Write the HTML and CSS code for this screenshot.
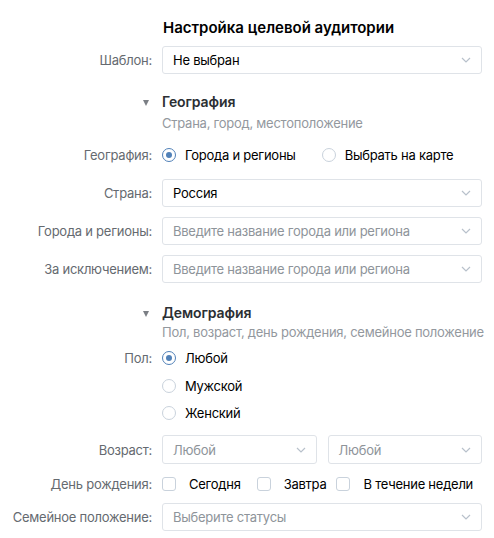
FILE: index.html
```html
<!DOCTYPE html>
<html lang="ru">
<head>
<meta charset="utf-8">
<link rel="stylesheet" href="styles.css">
</head>
<body>
<div class="form">
  <div class="row title-row">
    <div class="label"></div>
    <div class="ctrl"><h1 class="title">Настройка целевой аудитории</h1></div>
  </div>

  <div class="row row-select r-template">
    <div class="label">Шаблон:</div>
    <div class="ctrl"><div class="select"><span class="val">Не выбран</span><svg class="chev" viewBox="0 0 10 6"><path d="M1 1l4 4 4-4"/></svg></div></div>
  </div>

  <div class="row section-head r-geo">
    <div class="label"><span class="tri"></span></div>
    <div class="ctrl"><span class="sec-title">География</span></div>
  </div>
  <div class="row sub-row">
    <div class="label"></div>
    <div class="ctrl sub">Страна, город, местоположение</div>
  </div>

  <div class="row line-row r-georadio">
    <div class="label">География:</div>
    <div class="ctrl inline">
      <label class="opt"><span class="radio on"></span>Города и регионы</label>
      <label class="opt opt-map"><span class="radio"></span>Выбрать на карте</label>
    </div>
  </div>

  <div class="row row-select r-country">
    <div class="label">Страна:</div>
    <div class="ctrl"><div class="select"><span class="val">Россия</span><svg class="chev" viewBox="0 0 10 6"><path d="M1 1l4 4 4-4"/></svg></div></div>
  </div>
  <div class="row row-select r-next">
    <div class="label">Города и регионы:</div>
    <div class="ctrl"><div class="select"><span class="ph">Введите название города или региона</span><svg class="chev" viewBox="0 0 10 6"><path d="M1 1l4 4 4-4"/></svg></div></div>
  </div>
  <div class="row row-select r-next">
    <div class="label">За исключением:</div>
    <div class="ctrl"><div class="select"><span class="ph">Введите название города или региона</span><svg class="chev" viewBox="0 0 10 6"><path d="M1 1l4 4 4-4"/></svg></div></div>
  </div>

  <div class="row section-head r-demo">
    <div class="label"><span class="tri"></span></div>
    <div class="ctrl"><span class="sec-title">Демография</span></div>
  </div>
  <div class="row sub-row sub-demo">
    <div class="label"></div>
    <div class="ctrl sub">Пол, возраст, день рождения, семейное положение</div>
  </div>

  <div class="row line-row r-sex">
    <div class="label">Пол:</div>
    <div class="ctrl"><label class="opt"><span class="radio on"></span>Любой</label></div>
  </div>
  <div class="row line-row r-sex2">
    <div class="label"></div>
    <div class="ctrl"><label class="opt"><span class="radio"></span>Мужской</label></div>
  </div>
  <div class="row line-row r-sex3">
    <div class="label"></div>
    <div class="ctrl"><label class="opt"><span class="radio"></span>Женский</label></div>
  </div>

  <div class="row row-select r-age">
    <div class="label">Возраст:</div>
    <div class="ctrl pair">
      <div class="select"><span class="ph">Любой</span><svg class="chev" viewBox="0 0 10 6"><path d="M1 1l4 4 4-4"/></svg></div>
      <div class="select"><span class="ph">Любой</span><svg class="chev" viewBox="0 0 10 6"><path d="M1 1l4 4 4-4"/></svg></div>
    </div>
  </div>

  <div class="row line-row r-bday">
    <div class="label">День рождения:</div>
    <div class="ctrl inline">
      <label class="opt chk-opt"><span class="check"></span>Сегодня</label>
      <label class="opt chk-opt c2"><span class="check"></span>Завтра</label>
      <label class="opt chk-opt c3"><span class="check"></span>В течение недели</label>
    </div>
  </div>

  <div class="row row-select r-family">
    <div class="label">Семейное положение:</div>
    <div class="ctrl"><div class="select"><span class="ph">Выберите статусы</span><svg class="chev" viewBox="0 0 10 6"><path d="M1 1l4 4 4-4"/></svg></div></div>
  </div>
</div>
</body>
</html>
```

FILE: styles.css
```css
* { box-sizing: border-box; }
html, body { margin: 0; padding: 0; background: #fff; }
body {
  font-family: "Inter", "Noto Sans", "Liberation Sans", sans-serif;
  font-size: 13px;
  letter-spacing: -0.25px;
  color: #000;
}
.form { padding-top: 18px; width: 494px; }
.row { display: flex; align-items: center; }
.label {
  width: 152px;
  flex: none;
  text-align: right;
  color: #656a70;
  white-space: nowrap;
}
.ctrl { width: 320px; margin-left: 10px; flex: none; white-space: nowrap; }
.title {
  margin: 0 0 0 1px;
  font-size: 15px;
  line-height: 20px;
  font-weight: 600;
  letter-spacing: 0;
  color: #000;
}
.select {
  height: 28px;
  border: 1px solid #dfe3e8;
  border-radius: 3px;
  display: flex;
  align-items: center;
  padding: 0 10px 0 10px;
  justify-content: space-between;
}
.val { color: #000; }
.ph { color: #8e949a; }
.chev { width: 10px; height: 6px; fill: none; stroke: #b8c1cb; stroke-width: 1.2; }
.r-template { margin-top: 8px; }
.section-head { margin-top: 19px; height: 18px; }
.r-demo { margin-top: 21px; }
.tri {
  display: inline-block;
  width: 0; height: 0;
  border-left: 3.5px solid transparent;
  border-right: 3.5px solid transparent;
  border-top: 6px solid #7b7f85;
  margin-right: 3px;
  vertical-align: middle;
}
.sec-title { font-weight: 600; font-size: 14px; color: #2b2f33; line-height: 18px; letter-spacing: -0.1px; }
.sub-row { height: 18px; margin-top: 3px; }
.sub-demo { margin-top: 1px; }
.sub { color: #93989e; line-height: 18px; }
.line-row { height: 20px; }
.r-georadio { margin-top: 13px; }
.r-country { margin-top: 14px; }
.r-next { margin-top: 10px; }
.r-sex { margin-top: 7px; }
.r-sex2 { margin-top: 8px; }
.r-sex3 { margin-top: 7px; }
.r-age { margin-top: 12px; }
.r-age .select { height: 29px; }
.r-bday { margin-top: 10px; }
.r-family { margin-top: 9px; }
.inline { display: flex; align-items: center; }
.opt { display: flex; align-items: center; color: #000; white-space: nowrap; }
.opt-map { margin-left: 26px; }
.radio {
  width: 14px; height: 14px;
  border: 1px solid #c9d2dc;
  border-radius: 50%;
  margin-right: 9px;
  position: relative;
  flex: none;
}
.radio.on { border-color: #5181b8; }
.radio.on::after {
  content: "";
  position: absolute;
  left: 3px; top: 3px;
  width: 6px; height: 6px;
  border-radius: 50%;
  background: #5181b8;
}
.check {
  width: 14px; height: 14px;
  border: 1px solid #c9d2dc;
  border-radius: 3px;
  margin-right: 13px;
  flex: none;
}
.c2 { margin-left: 16px; }
.c3 { margin-left: 10px; }
.pair { display: flex; gap: 11px; }
.pair .select { flex: 1; }
```
